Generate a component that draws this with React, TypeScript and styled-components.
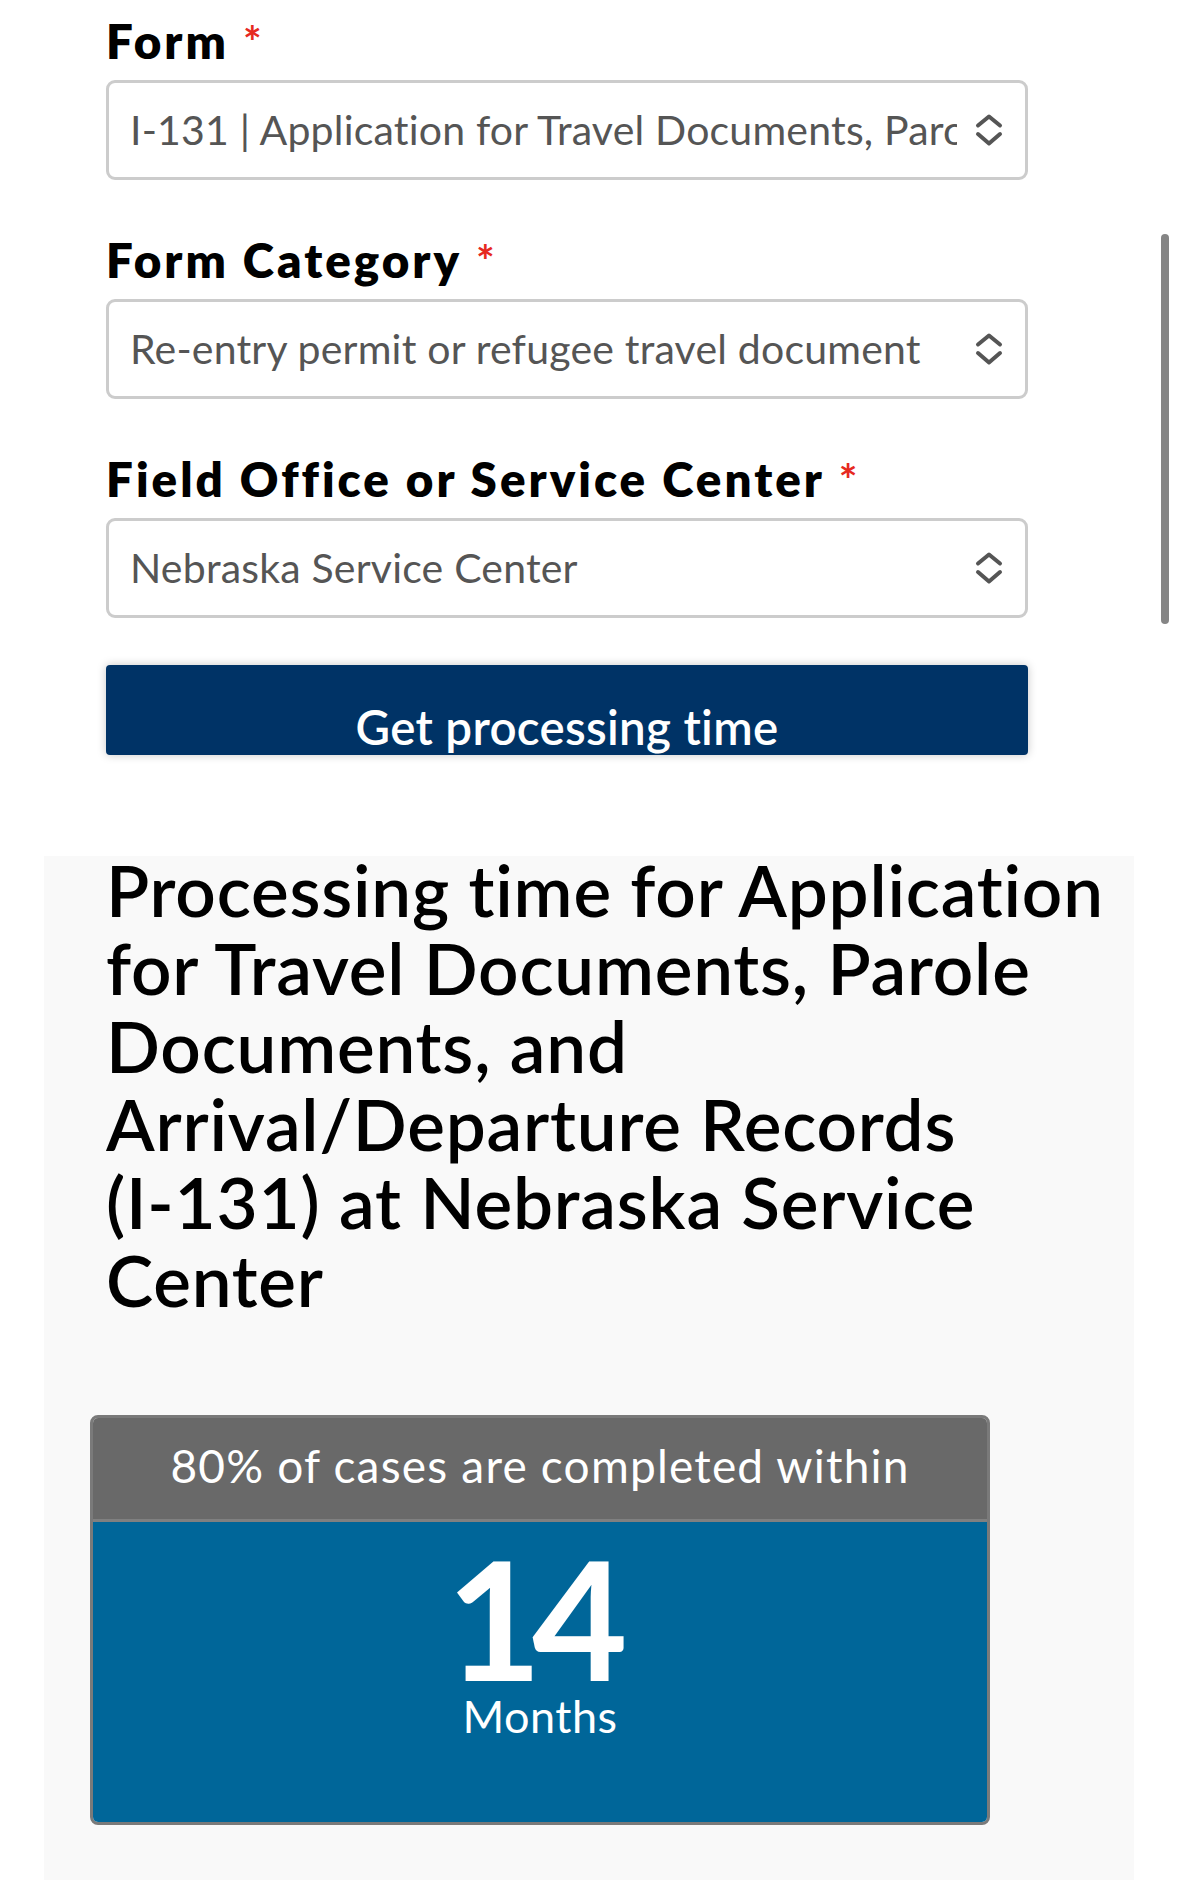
import React from "react";
import styled, { createGlobalStyle } from "styled-components";

const GlobalStyle = createGlobalStyle`
  html, body {
    margin: 0;
    padding: 0;
    background: #ffffff;
  }
  body {
    font-family: Lato, "Open Sans", Arial, sans-serif;
    -webkit-font-smoothing: antialiased;
  }
  * { box-sizing: border-box; }
`;

const Page = styled.div`
  width: 1179px;
  min-height: 1880px;
  display: flex;
  flex-direction: column;
  padding-top: 15px;
  overflow: hidden;
`;

const FormArea = styled.form`
  display: flex;
  flex-direction: column;
  padding-left: 106px;
  width: 1028px;
`;

const Field = styled.div<{ $first?: boolean }>`
  display: flex;
  flex-direction: column;
  gap: 13px;
  margin-top: ${(p) => (p.$first ? "0" : "54px")};
`;

const Label = styled.label`
  font-family: Lato, Arial, sans-serif;
  font-weight: 800;
  font-size: 47.5px;
  line-height: 52px;
  letter-spacing: 3px;
  color: #000;
`;

const Required = styled.span`
  color: #e6291f;
  font-size: 44px;
  font-weight: 700;
  line-height: 0;
  margin-left: 14px;
  vertical-align: 1px;
`;

const SelectBox = styled.div`
  height: 100px;
  width: 922px;
  border: 3px solid #cccccc;
  border-radius: 9px;
  background: #ffffff;
  display: flex;
  align-items: center;
  padding: 0 22px 0 21px;
  gap: 18px;
`;

const SelectValue = styled.span`
  flex: 1;
  min-width: 0;
  overflow: hidden;
  white-space: nowrap;
  font-family: Lato, Arial, sans-serif;
  font-size: 41px;
  letter-spacing: 0.2px;
  color: #555555;
  line-height: 50px;
`;

const ChevronIcon = styled.svg`
  width: 28px;
  height: 34px;
  flex: none;
`;

const SubmitButton = styled.button`
  margin-top: 47px;
  width: 922px;
  height: 90px;
  border: none;
  border-radius: 4px;
  background: #003366;
  box-shadow: 0 0 10px rgba(0, 0, 0, 0.22);
  display: flex;
  align-items: flex-end;
  justify-content: center;
  padding: 0;
  overflow: hidden;
  font-family: Lato, Arial, sans-serif;
  font-weight: 600;
  font-size: 47.5px;
  line-height: 57px;
  letter-spacing: 0.3px;
  color: #ffffff;
  cursor: pointer;
`;

const Results = styled.section`
  margin-top: 101px;
  margin-left: 44px;
  width: 1090px;
  flex: 1;
  background: #f9f9f9;
  padding: 0 0 60px 46px;
  display: flex;
  flex-direction: column;
`;

const Heading = styled.h2`
  margin: -5px 0 0 16px;
  font-family: Lato, Arial, sans-serif;
  font-weight: 600;
  font-size: 71px;
  line-height: 78px;
  letter-spacing: 0.8px;
  color: #000;
  white-space: nowrap;
`;

const Card = styled.div`
  margin-top: 96px;
  width: 900px;
  border: 3px solid #7a7a7a;
  border-radius: 8px;
  overflow: hidden;
  display: flex;
  flex-direction: column;
`;

const CardHeader = styled.div`
  height: 104px;
  padding-bottom: 6px;
  background: #696969;
  border-bottom: 3px solid #808080;
  display: flex;
  align-items: center;
  justify-content: center;
  font-family: Lato, Arial, sans-serif;
  font-size: 46px;
  line-height: 52px;
  letter-spacing: 1.2px;
  color: #ffffff;
`;

const CardBody = styled.div`
  background: #006699;
  padding: 21px 0 81px;
  display: flex;
  flex-direction: column;
  align-items: center;
  color: #ffffff;
  font-family: Lato, Arial, sans-serif;
`;

const BigNumber = styled.div`
  font-weight: 700;
  font-size: 165px;
  line-height: 148px;
  letter-spacing: -10px;
  padding-right: 16px;
`;

const Unit = styled.div`
  font-size: 45px;
  line-height: 50px;
  letter-spacing: 0.5px;
`;

const Scrollbar = styled.div`
  position: fixed;
  top: 234px;
  right: 10px;
  width: 8px;
  height: 390px;
  border-radius: 4px;
  background: #858585;
`;

const Chevron = () => (
  <ChevronIcon viewBox="0 0 28 34" aria-hidden="true">
    <path
      d="M3 12.5 L14 3.5 L25 12.5 M3 21 L14 30.5 L25 21"
      fill="none"
      stroke="#555555"
      strokeWidth="4"
      strokeLinecap="round"
      strokeLinejoin="round"
    />
  </ChevronIcon>
);

const fields = [
  { label: "Form", value: "I-131 | Application for Travel Documents, Parole Documents, and Arrival/Departure Records" },
  { label: "Form Category", value: "Re-entry permit or refugee travel document" },
  { label: "Field Office or Service Center", value: "Nebraska Service Center" },
];

export default function App() {
  return (
    <>
      <GlobalStyle />
      <Page>
        <FormArea onSubmit={(e) => e.preventDefault()}>
          {fields.map((f, i) => (
            <Field key={f.label} $first={i === 0}>
              <Label>
                {f.label}
                <Required>*</Required>
              </Label>
              <SelectBox role="combobox">
                <SelectValue>{f.value}</SelectValue>
                <Chevron />
              </SelectBox>
            </Field>
          ))}
          <SubmitButton type="submit">Get processing time</SubmitButton>
        </FormArea>
        <Results>
          <Heading>
            Processing time for Application
            <br />
            for Travel Documents, Parole
            <br />
            Documents, and
            <br />
            Arrival/Departure Records
            <br />
            (I-131) at Nebraska Service
            <br />
            Center
          </Heading>
          <Card>
            <CardHeader>80% of cases are completed within</CardHeader>
            <CardBody>
              <BigNumber>14</BigNumber>
              <Unit>Months</Unit>
            </CardBody>
          </Card>
        </Results>
        <Scrollbar />
      </Page>
    </>
  );
}
